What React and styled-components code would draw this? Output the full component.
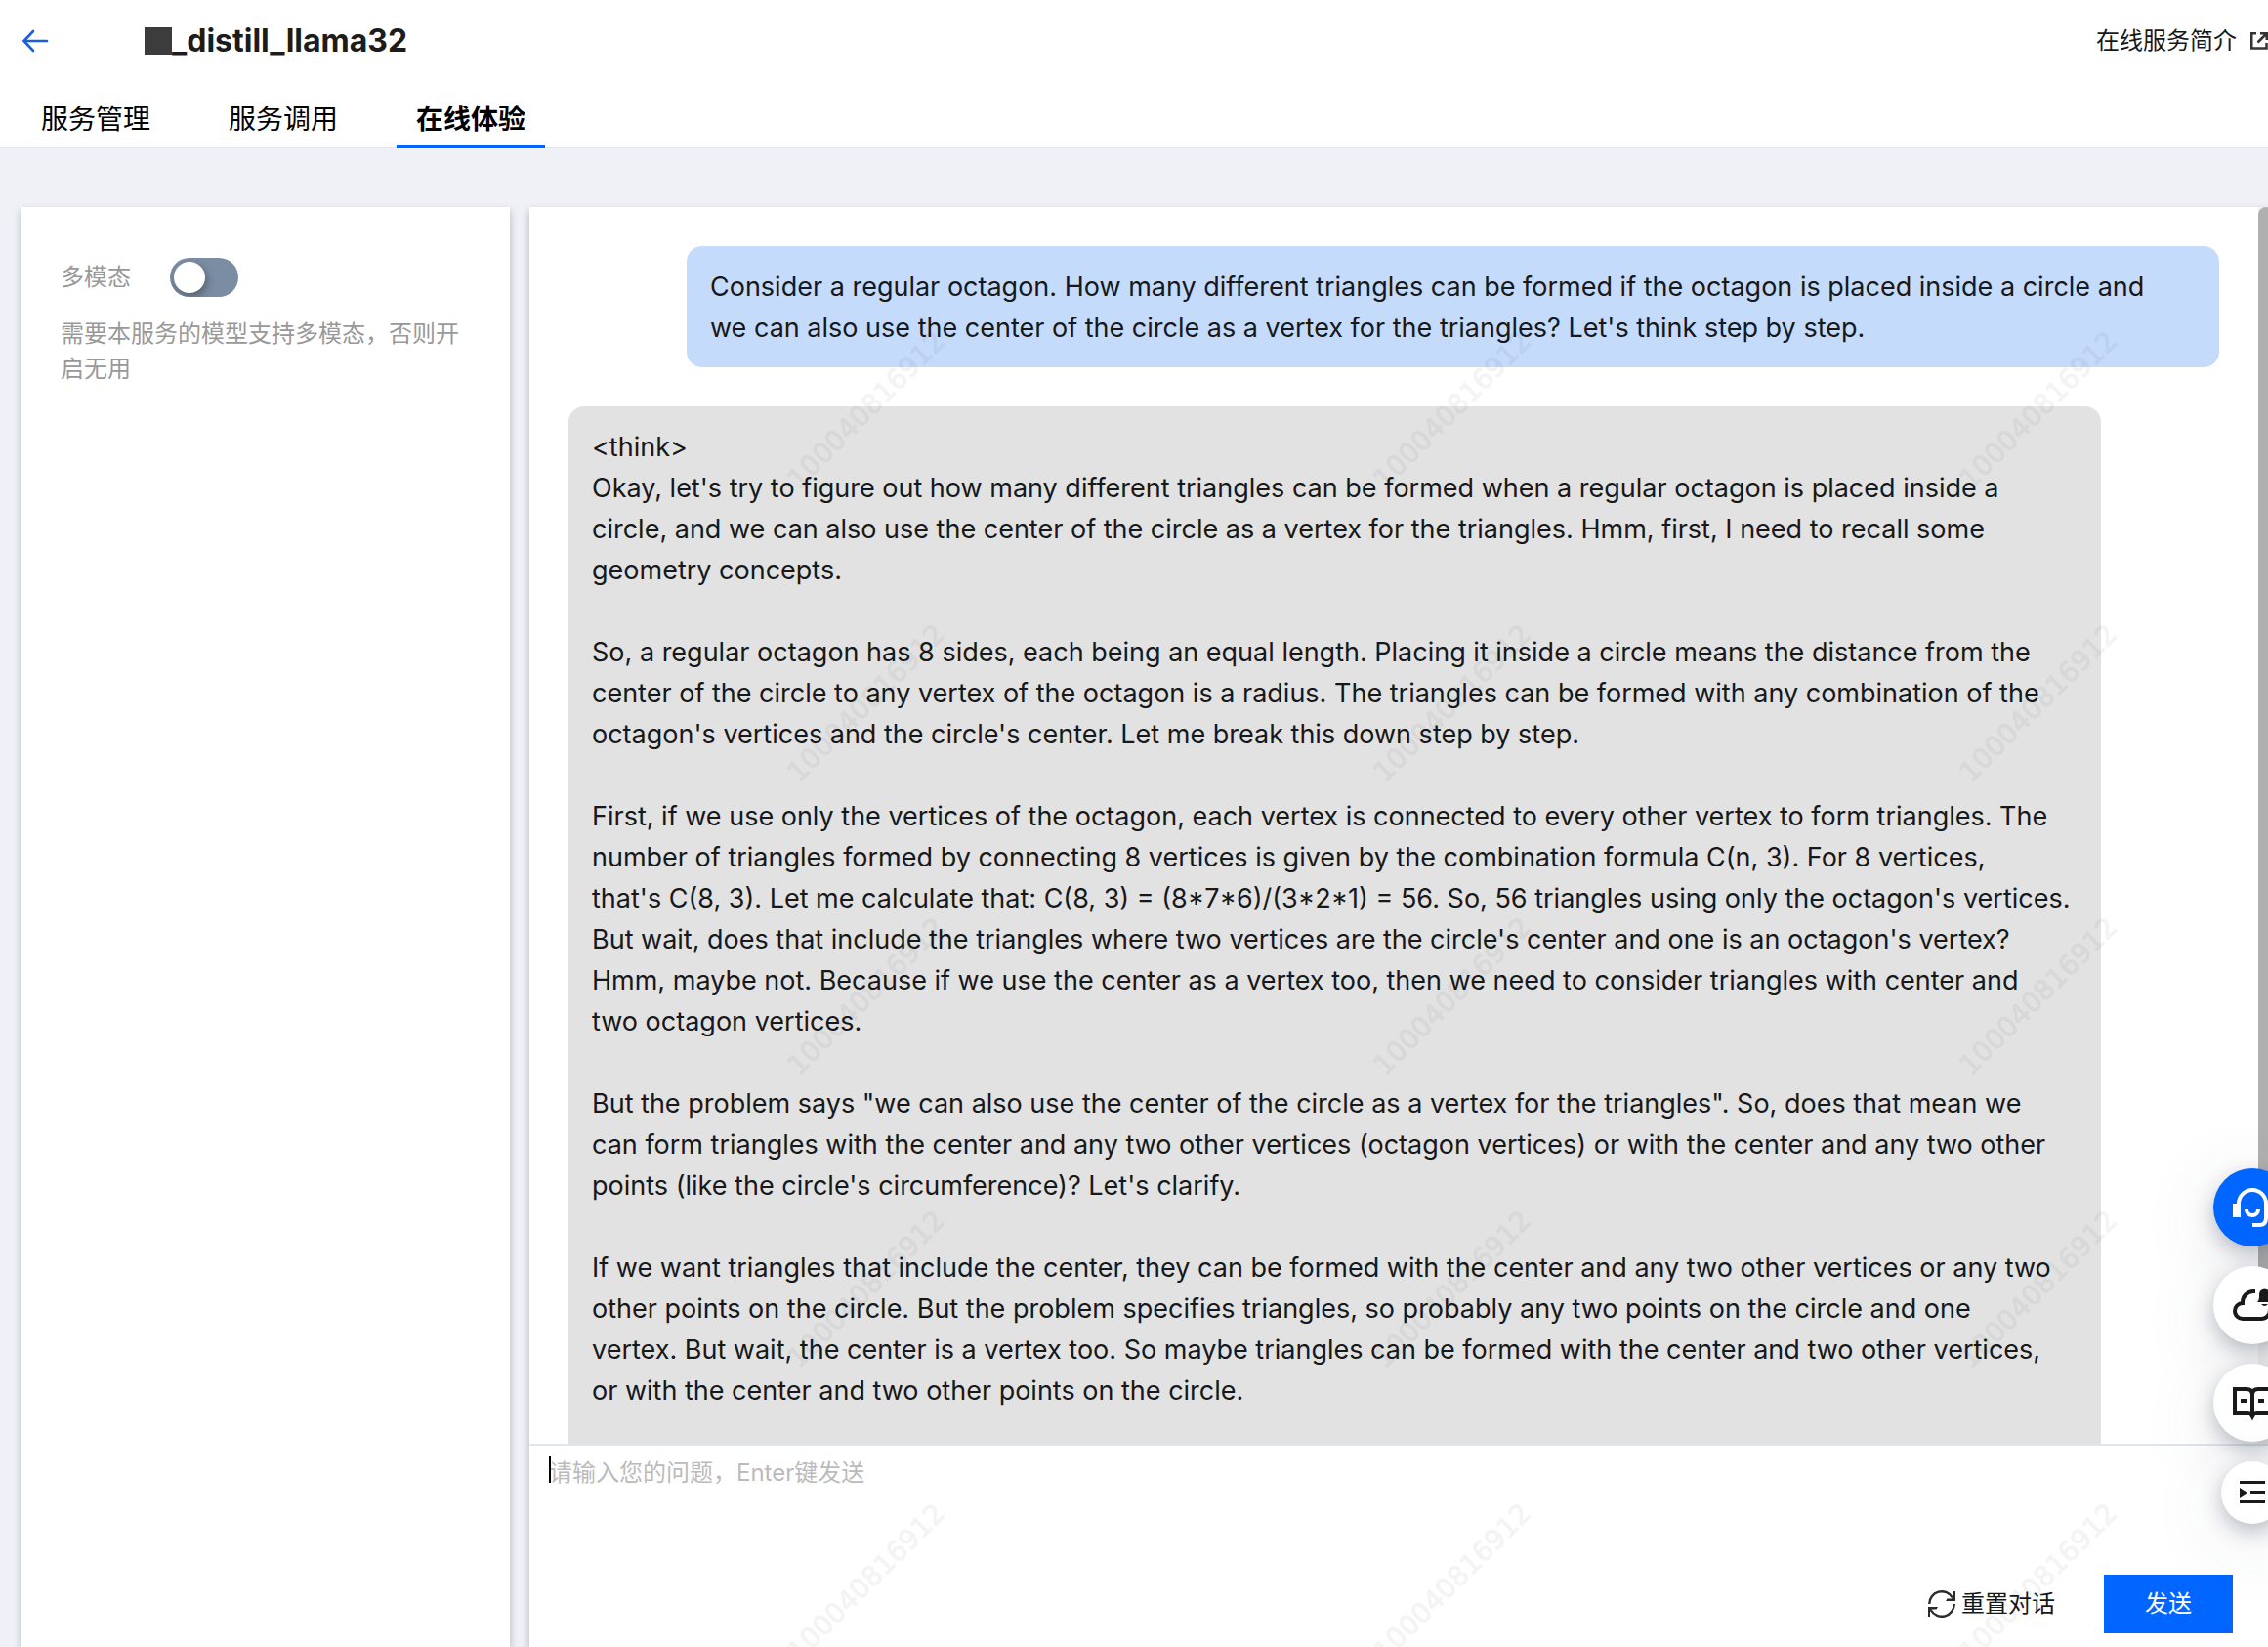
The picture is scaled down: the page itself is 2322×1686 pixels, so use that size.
import styled, { createGlobalStyle } from 'styled-components';

const question = [
  "Consider a regular octagon. How many different triangles can be formed if the octagon is placed inside a circle and",
  "we can also use the center of the circle as a vertex for the triangles? Let's think step by step.",
].join("\n");

const answer = [
  "<think>",
  "Okay, let's try to figure out how many different triangles can be formed when a regular octagon is placed inside a circle, and we can also use the center of the circle as a vertex for the triangles. Hmm, first, I need to recall some geometry concepts.",
  "",
  "So, a regular octagon has 8 sides, each being an equal length. Placing it inside a circle means the distance from the center of the circle to any vertex of the octagon is a radius. The triangles can be formed with any combination of the octagon's vertices and the circle's center. Let me break this down step by step.",
  "",
  "First, if we use only the vertices of the octagon, each vertex is connected to every other vertex to form triangles. The number of triangles formed by connecting 8 vertices is given by the combination formula C(n, 3). For 8 vertices,",
  "that's C(8, 3). Let me calculate that: C(8, 3) = (8*7*6)/(3*2*1) = 56. So, 56 triangles using only the octagon's vertices. But wait, does that include the triangles where two vertices are the circle's center and one is an octagon's vertex?",
  "Hmm, maybe not. Because if we use the center as a vertex too, then we need to consider triangles with center and",
  "two octagon vertices.",
  "",
  "But the problem says \"we can also use the center of the circle as a vertex for the triangles\". So, does that mean we",
  "can form triangles with the center and any two other vertices (octagon vertices) or with the center and any two other points (like the circle's circumference)? Let's clarify.",
  "",
  "If we want triangles that include the center, they can be formed with the center and any two other vertices or any two other points on the circle. But the problem specifies triangles, so probably any two points on the circle and one",
  "vertex. But wait, the center is a vertex too. So maybe triangles can be formed with the center and two other vertices,",
  "or with the center and two other points on the circle.",
  "",
  "",
].join("\n");

const tabs = ["服务管理", "服务调用", "在线体验"];

function Watermark() {
  return (
    <WatermarkLayer aria-hidden="true">
      <defs>
        <pattern id="wm" x="804" y="324" width="600" height="300" patternUnits="userSpaceOnUse">
          <text x="14" y="178" transform="rotate(-45 14 178)">100040816912</text>
        </pattern>
      </defs>
      <rect x="600" y="324" width="100%" height="100%" fill="url(#wm)" />
    </WatermarkLayer>
  );
}

function FloatButtons() {
  return (
    <FloatBar>
      <FloatButton $primary aria-label="客服">
        <svg width="40" height="40" viewBox="0 0 40 40" fill="none" stroke="#fff" strokeWidth="4">
          <path d="M0 16h8v14H0z" fill="#fff" stroke="none" />
          <path d="M32 16h8v14h-8z" fill="#fff" stroke="none" />
          <path d="M6 17v-1a14 14 0 0 1 28 0v15q0 7-7 7h-7" />
          <path d="M14 22a6 6 0 0 0 12 0" />
        </svg>
      </FloatButton>
      <FloatButton aria-label="通知">
        <svg width="40" height="40" viewBox="0 0 40 40" fill="none" stroke="#1a1a1a" strokeWidth="4">
          <path d="M23 6h-2a11 11 0 0 0-11 11v1a8 8 0 0 0 0 16h19a9 9 0 0 0 9-9v-4" />
          <path d="M25 17q2-2 2-5v-3a5.500 5.500 0 0 1 11 0v3q0 3 2 5zM29 19h7q-3.500 4-7 0z" fill="#1a1a1a" stroke="none" />
        </svg>
      </FloatButton>
      <FloatButton aria-label="文档">
        <svg width="40" height="40" viewBox="0 0 40 40" fill="none" stroke="#1a1a1a" strokeWidth="4">
          <path d="M20 34q-2-4-5-4H2V6h12q6 0 6 6q0-6 6-6h12v24H25q-3 0-5 4zV12M8 18h6M26 18h6" />
        </svg>
      </FloatButton>
      <FloatButton $small aria-label="展开">
        <svg width="28" height="24" viewBox="0 0 28 24" fill="#1a1a1a">
          <path d="M1 0h26v3H1zM12 10h15v3H12zM1 20h26v3H1zM1 7l8 5-8 5z" />
        </svg>
      </FloatButton>
    </FloatBar>
  );
}

function App() {
  return (
    <Page>
      <GlobalStyle />
      <Header>
        <TitleBar>
          <BackLink href="#" aria-label="返回">
            <svg width="28" height="24" viewBox="0 0 28 24" fill="none" stroke="#1a5fe0" strokeWidth="2.6" strokeLinecap="round">
              <path d="M26 12H3M12 2L2.500 12L12 22" />
            </svg>
          </BackLink>
          <Title><Redacted />_distill_llama32</Title>
          <DocLink href="#">
            在线服务简介
            <svg width="18" height="18" viewBox="0 0 18 18" fill="none" stroke="#333" strokeWidth="2.500">
              <path d="M6 1.250H1.250V16.500H16.500V11M7.500 10.500L15.500 2.500M10 1.250H16.750V8" />
            </svg>
          </DocLink>
        </TitleBar>
        <Tabs>
          {tabs.map((tab, i) => (
            <Tab key={tab} $active={i === 2}>{tab}</Tab>
          ))}
        </Tabs>
      </Header>
      <Content>
        <Settings>
          <SwitchRow>
            <label htmlFor="multi">多模态</label>
            <Switch id="multi" type="checkbox" />
          </SwitchRow>
          <Hint>需要本服务的模型支持多模态，否则开启无用</Hint>
        </Settings>
        <Chat>
          <Messages>
            <Bubble $mine>{question}</Bubble>
            <Bubble>{answer}</Bubble>
            <ScrollTrack>
              <ScrollThumb />
            </ScrollTrack>
          </Messages>
          <Composer>
            <Input aria-label="问题" placeholder="请输入您的问题，Enter键发送" />
            <Caret />
            <Actions>
              <ResetButton>
                <svg width="28" height="28" viewBox="0 0 28 28" fill="none" stroke="#2a2a2a" strokeWidth="2.400">
                  <path d="M1.200 14A12.800 12.800 0 0 1 25 7.500M26.800 14A12.800 12.800 0 0 1 3 20.500" />
                  <path d="M28 1v10H18l1.500-2.500h4.500l2-2.500V1zM0 27V17h10l-1.500 2.500H4L2 22v5z" fill="#2a2a2a" stroke="none" />
                </svg>
                重置对话
              </ResetButton>
              <SendButton>发送</SendButton>
            </Actions>
          </Composer>
        </Chat>
      </Content>
      <Watermark />
      <FloatButtons />
    </Page>
  );
}

export default App;

const GlobalStyle = createGlobalStyle`
  * {
    box-sizing: border-box;
  }
  body {
    margin: 0;
    overflow: hidden;
    font-family: Inter, "Noto Sans CJK SC", sans-serif;
    font-size: 24px;
    line-height: 36px;
    color: #16181a;
  }
  button, input, textarea {
    font: inherit;
    color: inherit;
  }
`;

const Page = styled.div`
  display: flex;
  flex-direction: column;
  height: 100vh;
  background: #eff1f6;
`;

const Header = styled.header`
  background: #fff;
  border-bottom: 2px solid #e3e6eb;
`;

const TitleBar = styled.div`
  display: flex;
  align-items: center;
  height: 84px;
  padding-left: 22px;
`;

const BackLink = styled.a`
  display: flex;
  width: 126px;
`;

const Title = styled.h1`
  display: flex;
  align-items: center;
  flex: 1;
  margin: 0;
  font-size: 32px;
  font-weight: 700;
  line-height: 40px;
  color: #1c1c1c;
`;

const Redacted = styled.span`
  width: 28px;
  height: 28px;
  background: #3c3c3c;
`;

const DocLink = styled.a`
  display: flex;
  align-items: center;
  gap: 14px;
  color: inherit;
  text-decoration: none;
`;

const Tabs = styled.nav`
  display: flex;
  gap: 40px;
  padding-left: 22px;
  margin-bottom: -2px;
`;

const Tab = styled.button`
  height: 68px;
  padding: 12px 20px 0;
  border: none;
  border-bottom: 4px solid ${(props) => (props.$active ? '#0066ff' : 'transparent')};
  background: none;
  font-size: 28px;
  font-weight: ${(props) => (props.$active ? 700 : 400)};
  color: #000;
`;

const Content = styled.main`
  display: flex;
  flex: 1;
  gap: 20px;
  min-height: 0;
  padding: 60px 0 0 22px;
`;

const Panel = styled.section`
  background: #fff;
  box-shadow: 0 4px 8px rgba(54, 58, 80, 0.32);
`;

const Settings = styled(Panel)`
  width: 500px;
  padding: 52px 40px;
  color: #999;
`;

const SwitchRow = styled.div`
  display: flex;
  align-items: center;
  gap: 40px;
`;

const Switch = styled.input`
  appearance: none;
  width: 70px;
  height: 40px;
  margin: 0;
  padding: 4px;
  border-radius: 20px;
  background: #7b8da3;
  overflow: hidden;

  &::before {
    content: "";
    display: block;
    width: 32px;
    height: 32px;
    border-radius: 50%;
    background: #fff;
    box-shadow: 2px 4px 8px rgba(0, 0, 0, 0.32);
  }
`;

const Hint = styled.p`
  margin: 20px 0 0;
`;

const Chat = styled(Panel)`
  display: flex;
  flex-direction: column;
  flex: 1;
  min-width: 0;
`;

const Messages = styled.div`
  position: relative;
  display: flex;
  flex-direction: column;
  gap: 40px;
  flex: 1;
  min-height: 0;
  overflow: hidden;
  padding: 40px 50px 0 40px;
`;

const Bubble = styled.div`
  flex-shrink: 0;
  padding: 21px 24px 19px;
  border-radius: 16px;
  font-size: 27px;
  line-height: 42px;
  white-space: pre-wrap;
  ${(props) => (props.$mine ? 'margin-left: 121px; background: #c5dbfc;' : 'margin-right: 121px; background: #e2e2e2;')}
`;

const ScrollTrack = styled.div`
  position: absolute;
  top: 0;
  bottom: 0;
  right: -6px;
  width: 16px;
  background: #f3f3f3;
`;

const ScrollThumb = styled.div`
  height: 90%;
  border-radius: 8px;
  background: #b0b0b0;
`;

const Composer = styled.div`
  position: relative;
  display: flex;
  flex-direction: column;
  border-top: 2px solid #e1e6ec;
`;

const Input = styled.textarea`
  height: 132px;
  padding: 10px 20px;
  border: none;
  outline: none;
  resize: none;
  background: none;

  &::placeholder {
    color: #bbb;
  }
`;

const Caret = styled.span`
  position: absolute;
  top: 10px;
  left: 20px;
  width: 2px;
  height: 28px;
  background: #000;
`;

const Actions = styled.div`
  display: flex;
  justify-content: flex-end;
  gap: 50px;
  padding: 0 36px 14px;
`;

const ResetButton = styled.button`
  display: flex;
  align-items: center;
  gap: 6px;
  padding: 0;
  border: none;
  background: none;
`;

const SendButton = styled.button`
  width: 132px;
  height: 60px;
  border: none;
  background: #0066ff;
  color: #fff;
`;

const WatermarkLayer = styled.svg`
  position: fixed;
  inset: 0;
  width: 100%;
  height: 100%;
  pointer-events: none;

  text {
    font-family: "DejaVu Sans", sans-serif;
    font-size: 28px;
    fill: #000;
    stroke: #000;
    stroke-width: 1;
    opacity: 0.045;
  }
`;

const FloatBar = styled.div`
  position: fixed;
  right: -24px;
  bottom: 126px;
  display: flex;
  flex-direction: column;
  align-items: center;
  gap: 20px;
`;

const FloatButton = styled.button`
  position: relative;
  display: flex;
  align-items: center;
  justify-content: center;
  width: ${(props) => (props.$small ? 64 : 80)}px;
  height: ${(props) => (props.$small ? 64 : 80)}px;
  padding: 0;
  border: none;
  border-radius: 50%;
  background: ${(props) => (props.$primary ? '#0066ff' : '#fff')};
  box-shadow: 0 8px 20px rgba(54, 58, 80, 0.3), 0 16px 80px rgba(54, 70, 90, 0.14);
`;
